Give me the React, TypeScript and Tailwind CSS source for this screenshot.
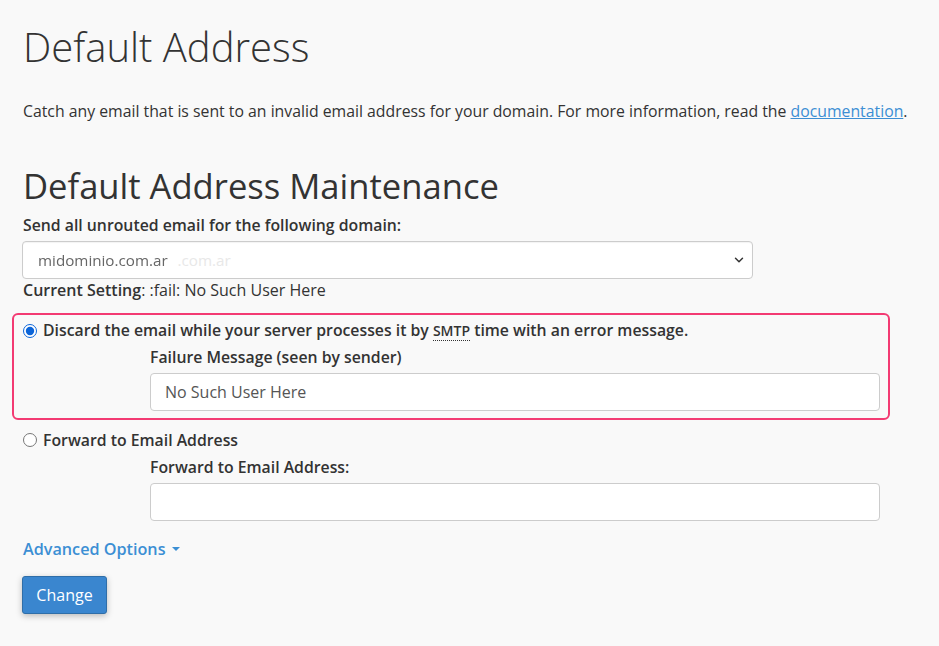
import { ChevronDown } from 'lucide-react';

const font = { fontFamily: '"Open Sans", "Noto Sans", sans-serif' };

function Radio({ checked, name }: { checked?: boolean; name: string }) {
  return (
    <input
      type="radio"
      name={name}
      defaultChecked={checked}
      className="m-0 h-[14px] w-[14px] shrink-0 accent-[#0b64d8]"
    />
  );
}

export default function App() {
  return (
    <div className="min-h-[646px] w-full bg-[#f9f9f9] text-[#333]" style={font}>
      <div className="pl-[23px] pt-[20px]">
        <h1 className="text-[40px] leading-[54px] font-light text-[#333]">Default Address</h1>

        <p className="mt-[26px] whitespace-nowrap text-[15.8px] leading-[22px]">
          Catch any email that is sent to an invalid email address for your domain. For more information, read the{' '}
          <a className="text-[#3c8fd4] underline">documentation</a>.
        </p>

        <h2 className="mt-[42px] text-[34.6px] leading-[44px] font-medium text-[#333]">Default Address Maintenance</h2>

        <div className="mt-[6px] text-[15.8px] leading-[22px] font-semibold">Send all unrouted email for the following domain:</div>

        <div className="-ml-px mt-[5px] flex h-[38px] w-[731px] items-center justify-between rounded-[4px] border border-[#ccc] bg-white pl-[15px] pr-[6px] shadow-[inset_0_1px_1px_rgba(0,0,0,0.05)]">
          <span className="text-[15.2px]">
            <span className="text-[#666] blur-[0.4px]">midominio.com.ar</span>
            <span className="ml-[10px] text-[#e8e8e8]">.com.ar</span>
          </span>
          <ChevronDown className="h-[14px] w-[14px] text-[#333]" strokeWidth={2.5} />
        </div>

        <div className="mt-0 text-[16px] leading-[22px]">
          <span className="font-semibold">Current Setting</span>: :fail: No Such User Here
        </div>

        <div className="-ml-[11px] mt-[12px] w-[878px] rounded-[6px] border-2 border-[#f33b73] pl-[9px] pr-[10px] pb-[7px] pt-[4px]">
          <label className="flex items-center gap-[6px] text-[15.8px] leading-[22px] font-semibold">
            <Radio checked name="fwdopt" />
            <span>
              Discard the email while your server processes it by{' '}
              <abbr className="text-[14px] no-underline border-b border-dotted border-[#333]" title="Simple Mail Transfer Protocol">
                SMTP
              </abbr>{' '}
              time with an error message.
            </span>
          </label>
          <div className="ml-[127px] mt-[4px] text-[15.8px] leading-[22px] font-semibold">Failure Message (seen by sender)</div>
          <div className="ml-[127px] mt-[5px] flex h-[38px] w-[730px] items-center rounded-[4px] border border-[#ccc] bg-white px-[14px] text-[16px] text-[#555]">
            No Such User Here
          </div>
        </div>

        <label className="mt-[9px] flex items-center gap-[6px] text-[15.8px] leading-[22px] font-semibold">
          <Radio name="fwdopt" />
          <span>Forward to Email Address</span>
        </label>
        <div className="ml-[127px] mt-[5px] text-[15.8px] leading-[22px] font-semibold">Forward to Email Address:</div>
        <div className="ml-[127px] mt-[5px] h-[38px] w-[730px] rounded-[4px] border border-[#ccc] bg-white" />

        <button className="mt-[17px] flex items-center gap-[6px] text-[16.2px] leading-[22px] font-semibold text-[#3c8fd4]">
          Advanced Options
          <span className="h-0 w-0 border-x-[4px] border-t-[4px] border-x-transparent border-t-[#3c8fd4]" />
        </button>

        <button className="-ml-px mt-[16px] h-[38px] w-[85px] rounded-[3px] border border-[#2f6ea8] bg-[#3a86cf] text-[16px] text-white shadow-[0_2px_6px_rgba(0,0,0,0.25)]">
          Change
        </button>
      </div>
    </div>
  );
}
